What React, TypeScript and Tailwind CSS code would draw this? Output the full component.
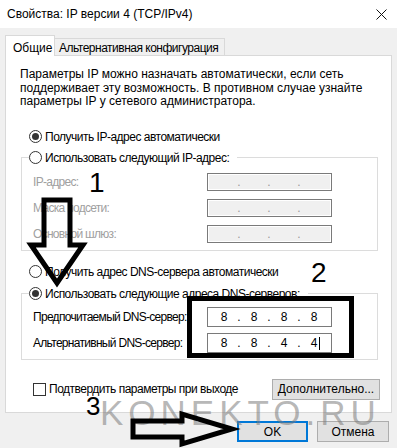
import type { ReactNode } from 'react';

// Windows "IPv4 properties" dialog with the tutorial marks drawn over it.

function Radio({ checked = false }: { checked?: boolean }) {
  return (
    <span className="flex h-[13px] w-[13px] shrink-0 items-center justify-center rounded-full border border-[#333333] bg-white">
      {checked && <span className="h-[7px] w-[7px] rounded-full bg-[#333333]" />}
    </span>
  );
}

function RadioRow({ checked, children }: { checked?: boolean; children: ReactNode }) {
  return (
    <div className="flex h-[16px] items-center gap-[3px] whitespace-nowrap">
      <Radio checked={checked} />
      <span className="tracking-[-0.5px]">{children}</span>
    </div>
  );
}

// Four octet cells 30px wide, with the dots sitting on the cell boundaries.
function IpBox({ values, disabled = false, caret = false, h }: { values: string[]; disabled?: boolean; caret?: boolean; h: string }) {
  return (
    <div
      className={`flex w-[125px] items-center border border-[#7a7a7a] pl-px ${h} ${
        disabled ? 'bg-[#f0f0f0] shadow-[inset_0_0_0_1px_#ffffff] text-[#9a9a9a]' : 'bg-white text-black'
      }`}
    >
      {values.map((v, i) => (
        <div key={i} className="flex">
          <span className="relative w-[30px] text-center">
            {v}
            {caret && i === 3 && <span className="absolute left-[20px] top-[1px] h-[13px] w-px bg-black" />}
          </span>
          {i < 3 && <span className="flex w-0 justify-center">.</span>}
        </div>
      ))}
    </div>
  );
}

function Field({ label, children, disabled }: { label: string; children: ReactNode; disabled?: boolean }) {
  return (
    <div className="flex items-center">
      <span className={`w-[174px] whitespace-nowrap tracking-[-0.7px] ${disabled ? 'text-[#a0a0a0]' : 'text-black'}`}>{label}</span>
      {children}
    </div>
  );
}

export default function App() {
  const empty = ['', '', '', ''];

  return (
    <div className="relative h-[448px] w-[397px] overflow-hidden bg-[#f0f0f0] font-['Liberation_Sans',Arial,sans-serif] text-[12px] leading-[14px] text-black">
      {/* title bar */}
      <div className="flex h-[28px] items-center justify-between bg-white pl-[7px] pr-[10px]">
        <span>Свойства: IP версии 4 (TCP/IPv4)</span>
        <svg width="11" height="11" viewBox="0 0 11 11" stroke="#111" strokeWidth="1">
          <path d="M0.5 0.5 L10.5 10.5 M10.5 0.5 L0.5 10.5" />
        </svg>
      </div>

      {/* tabs */}
      <div className="flex h-[27px] items-end pl-[5px]">
        <div className="relative z-10 -mb-px flex h-[21px] w-[50px] items-center border border-b-0 border-[#d9d9d9] bg-white pl-[7px] pt-[3px]">
          Общие
        </div>
        <div className="-ml-px flex h-[17px] w-[171px] items-center whitespace-nowrap border border-b-0 border-[#d9d9d9] pl-[4px] pt-[2px] tracking-[-0.5px]">
          Альтернативная конфигурация
        </div>
      </div>

      {/* tab page */}
      <div className="mx-[5px] h-[358px] border border-[#d9d9d9] bg-white pl-[14px] pr-[11px] pt-[12px]">
        <p className="leading-[13.5px]">
          Параметры IP можно назначать автоматически, если сеть
          <br />
          поддерживает эту возможность. В противном случае узнайте
          <br />
          параметры IP у сетевого администратора.
        </p>

        <div className="ml-[9px] mt-[20px]">
          <RadioRow checked>Получить IP-адрес автоматически</RadioRow>
        </div>

        <fieldset className="ml-px mt-[5px] w-[357px] border border-[#dcdcdc] pb-[7px] pl-[11px]">
          <legend className="-ml-[4px] pr-[8px]">
            <RadioRow>Использовать следующий IP-адрес:</RadioRow>
          </legend>
          <div className="flex flex-col gap-[8px] pt-[7px]">
            <Field label="IP-адрес:" disabled>
              <IpBox values={empty} disabled h="h-[18px]" />
            </Field>
            <Field label="Маска подсети:" disabled>
              <IpBox values={empty} disabled h="h-[18px]" />
            </Field>
            <Field label="Основной шлюз:" disabled>
              <IpBox values={empty} disabled h="h-[18px]" />
            </Field>
          </div>
        </fieldset>

        <div className="ml-[9px] mt-[13px]">
          <RadioRow>Получить адрес DNS-сервера автоматически</RadioRow>
        </div>

        <fieldset className="ml-px mt-[6px] w-[357px] border border-[#dcdcdc] pb-[6px] pl-[11px]">
          <legend className="-ml-[4px] pr-[8px]">
            <RadioRow checked>Использовать следующие адреса DNS-серверов:</RadioRow>
          </legend>
          <div className="flex flex-col gap-[6px] pt-[5px]">
            <Field label="Предпочитаемый DNS-сервер:">
              <IpBox values={['8', '8', '8', '8']} h="h-[20px]" />
            </Field>
            <Field label="Альтернативный DNS-сервер:">
              <IpBox values={['8', '8', '4', '4']} caret h="h-[20px]" />
            </Field>
          </div>
        </fieldset>

        <div className="mt-[19px] flex items-center justify-between pl-[13px]">
          <div className="flex items-center gap-[3px]">
            <span className="h-[13px] w-[13px] border border-[#333333] bg-white" />
            <span className="tracking-[-0.5px]">Подтвердить параметры при выходе</span>
          </div>
          <button className="h-[21px] w-[108px] border border-[#adadad] bg-[#e1e1e1]">Дополнительно...</button>
        </div>
      </div>

      {/* dialog buttons */}
      <div className="mt-[8px] flex justify-end gap-[9px] pr-[8px]">
        <button className="h-[21px] w-[71px] border-2 border-[#0078d7] bg-[#e1e1e1]">OK</button>
        <button className="h-[21px] w-[72px] border border-[#adadad] bg-[#e1e1e1]">Отмена</button>
      </div>

      {/* tutorial overlay: watermark, step numbers, arrows, highlight box */}
      <span className="pointer-events-none absolute left-[100px] top-[395px] text-[35px] leading-none tracking-[5px] text-[#7a7a7a]/55">
        KONEKTO.RU
      </span>
      <span className="absolute left-[89px] top-[169px] text-[28px] leading-none">1</span>
      <span className="absolute left-[311px] top-[259px] text-[28px] leading-none">2</span>
      <span className="absolute left-[86px] top-[393px] text-[26px] leading-none">3</span>

      <div className="absolute left-[187px] top-[296px] h-[62px] w-[167px] border-[5px] border-black" />

      <svg className="absolute left-0 top-0" width="397" height="448" viewBox="0 0 397 448" fill="none" stroke="#000" strokeWidth="5" strokeLinejoin="miter">
        <path d="M44 200 L70 200 L70 245 L83 245 L57 283 L31 245 L44 245 Z" />
        <path d="M133 421 L182 421 L182 414 L232 429 L182 444 L182 437 L133 437 Z" />
      </svg>
    </div>
  );
}
